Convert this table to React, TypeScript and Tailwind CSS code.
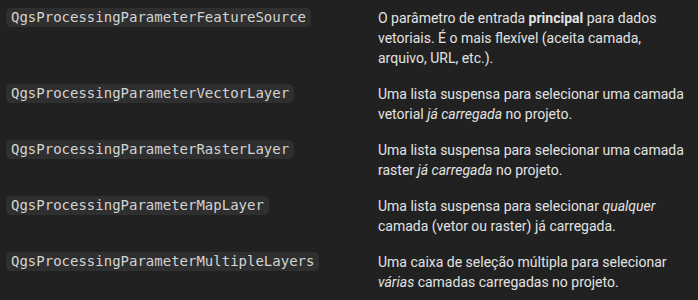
import React from "react";

const rows: { code: string; desc: React.ReactNode }[] = [
  {
    code: "QgsProcessingParameterFeatureSource",
    desc: (
      <>
        O parâmetro de entrada <strong className="font-bold">principal</strong> para dados vetoriais. É o mais flexível (aceita camada, arquivo, URL, etc.).
      </>
    ),
  },
  {
    code: "QgsProcessingParameterVectorLayer",
    desc: (
      <>
        Uma lista suspensa para selecionar uma camada vetorial <em>já carregada</em> no projeto.
      </>
    ),
  },
  {
    code: "QgsProcessingParameterRasterLayer",
    desc: (
      <>
        Uma lista suspensa para selecionar uma camada raster <em>já carregada</em> no projeto.
      </>
    ),
  },
  {
    code: "QgsProcessingParameterMapLayer",
    desc: (
      <>
        Uma lista suspensa para selecionar <em>qualquer</em> camada (vetor ou raster) já carregada.
      </>
    ),
  },
  {
    code: "QgsProcessingParameterMultipleLayers",
    desc: (
      <>
        Uma caixa de seleção múltipla para selecionar <em>várias</em> camadas carregadas no projeto.
      </>
    ),
  },
];

export default function App() {
  return (
    <div className="w-[698px] h-[300px] bg-[#212121] overflow-hidden" style={{ fontFamily: "Roboto, 'Liberation Sans', sans-serif" }}>
      <div className="flex flex-col">
        {rows.map((r) => (
          <div key={r.code} className="flex py-[8px]">
            <div className="w-[372px] shrink-0 pl-[6px] leading-[20px]">
              <code
                className="inline-block align-top h-[19px] leading-[19px] px-[5px] rounded-[5px] bg-[#2f2f2f] text-[#d4d4d4] text-[14px]"
                style={{ fontFamily: "'DejaVu Sans Mono', monospace" }}
              >
                {r.code}
              </code>
            </div>
            <div className="w-[318px] pl-[6px] text-[14px] leading-[20px] text-[#e3e3e3]">{r.desc}</div>
          </div>
        ))}
      </div>
    </div>
  );
}
